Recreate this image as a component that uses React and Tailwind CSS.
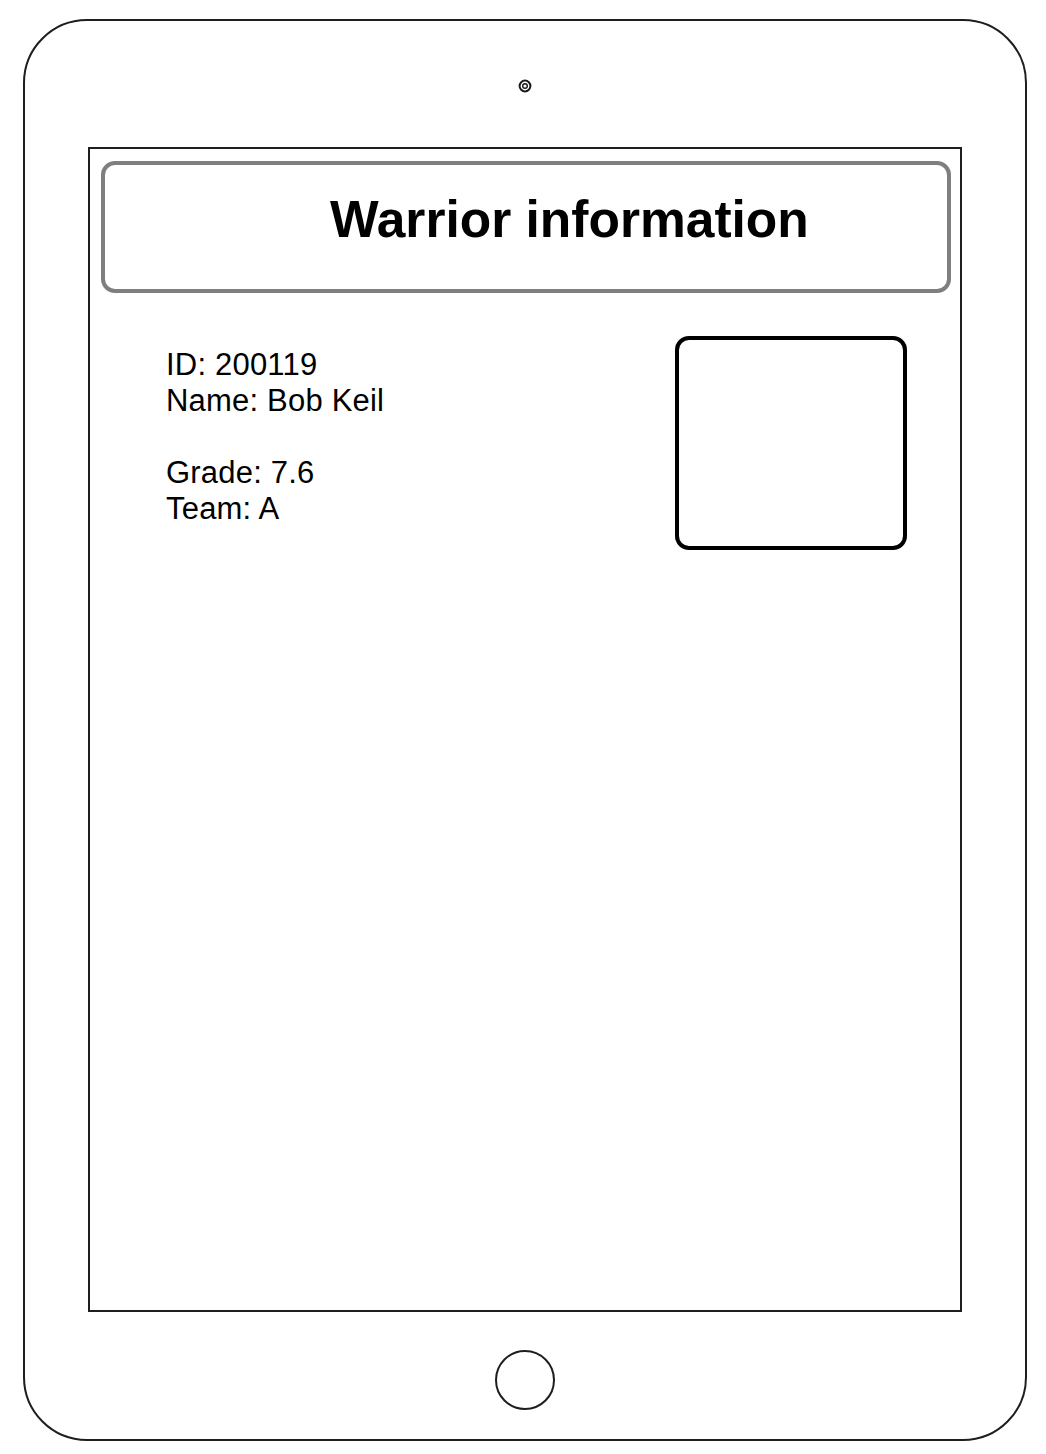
const InfoLine = ({ children }) => <p className="h-[36px]">{children}</p>;

const App = () => {
  return (
    <div className="w-[1046px] h-[1454px] bg-white pt-[19px] font-['Liberation_Sans',Arial,sans-serif] text-black">
      {/* tablet body */}
      <div className="ml-[23px] w-[1004px] h-[1422px] border-2 border-[#1e1e1e] rounded-[64px] flex flex-col items-center">
        {/* camera */}
        <svg className="mt-[58px]" width="14" height="14" viewBox="0 0 14 14">
          <circle cx="7" cy="7" r="5.4" fill="none" stroke="#1a1a1a" strokeWidth="2" />
          <circle cx="7" cy="7" r="2.3" fill="none" stroke="#1a1a1a" strokeWidth="1.4" />
        </svg>

        {/* screen */}
        <div className="mt-[54px] w-[874px] h-[1165px] border-2 border-[#1e1e1e] flex flex-col">
          <div className="mt-[12px] ml-[11px] w-[850px] h-[132px] border-4 border-[#7f7f7f] rounded-[14px] pt-[29px] pl-[225px]">
            <h1 className="text-[51.5px] leading-[51px] font-bold">Warrior information</h1>
          </div>

          <div className="mt-[43px] flex items-start">
            <div className="flex-1 pl-[76px] pt-[11px] text-[31px] leading-[36px] tracking-[0.2px]">
              <InfoLine>ID: 200119</InfoLine>
              <InfoLine>Name: Bob Keil</InfoLine>
              <InfoLine />
              <InfoLine>Grade: 7.6</InfoLine>
              <InfoLine>Team: A</InfoLine>
            </div>
            <div className="mr-[53px] w-[232px] h-[214px] border-4 border-black rounded-[14px]" />
          </div>
        </div>

        {/* home button */}
        <div className="mt-[38px] w-[60px] h-[60px] rounded-full border-2 border-[#1e1e1e]" />
      </div>
    </div>
  );
};

export default App;
